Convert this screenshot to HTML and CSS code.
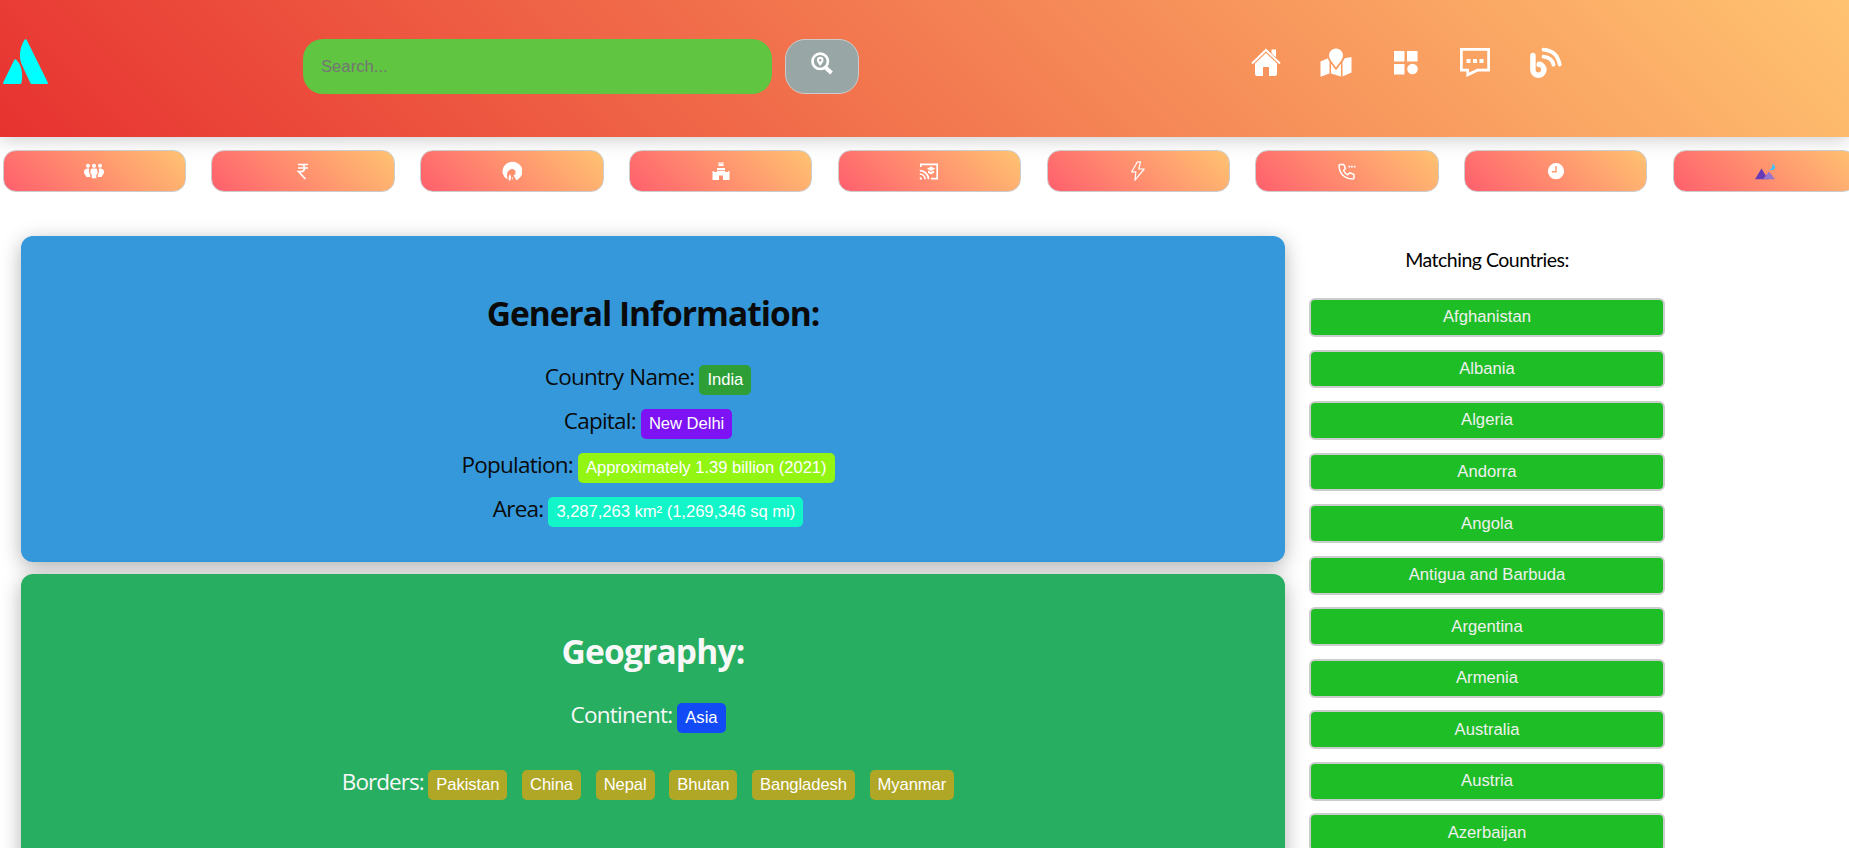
FILE: index.html
```html
<!DOCTYPE html>
<html lang="en">
<head>
<meta charset="utf-8">
<title>Countries</title>
<link rel="stylesheet" href="styles.css">
</head>
<body>
<header class="header">
  <svg class="logo" viewBox="0 0 45 45"><path d="M23.5 .5Q22.5-.3 21.5.7C17 8 15.5 17 18.5 25L27.3 44Q27.6 45 28.8 45H44Q45.4 45 44.8 43.6ZM13.5 21Q12.3 19.6 11.2 21L.2 43.6Q-.2 45 1 45H17Q18.3 45 18.6 43.4C20 36 19.2 27 13.5 21Z" fill="#0ff"/></svg>
  <input class="search" type="text" placeholder="Search...">
  <button class="go"><svg width="22" height="23" viewBox="0 0 22 23"><circle cx="9.2" cy="9.3" r="7.7" fill="none" stroke="#fff" stroke-width="2.700"/><path d="M14.5 15.5l6 5.5" stroke="#fff" stroke-width="4" fill="none"/><path fill="#fff" fill-rule="evenodd" d="M9.2 4.8a3.3 3.3 0 0 0-3.3 3.4c0 2 2 3.7 3.3 5.8 1.300-2.100 3.300-3.800 3.300-5.800a3.300 3.300 0 0 0-3.300-3.400zm0 2.300a1.200 1.200 0 1 1 0 2.400 1.200 1.200 0 0 1 0-2.400z"/></svg></button>
  <nav class="nav">
    <svg width="30" height="32" viewBox="0 0 30 32"><path d="M1 16.500L15 3l14 13.500" fill="none" stroke="#fff" stroke-width="2"/><path d="M20.500 2.500h4.500v8l-4.500-4.200zM15 6L4 16.500V27q0 2 2 2h6V20h6v9h6q2 0 2-2V16.500z" fill="#fff"/></svg>
    <svg class="map" width="32" height="32" viewBox="0 0 32 32"><path fill="#fff" d="M16 1.500a7 7 0 0 0-7 7c0 4 5 8.500 7 12 2-3.500 7-8 7-12a7 7 0 0 0-7-7zM.5 14.500L8 11.300q.5 2 1.500 3.500V26.500L.5 29.700zM11 16.500l4.300 6q.7.800 1.400 0l4.300-6V29.500L11 26.500zM22.500 15q2-3 2.200-3.700L31.500 10V25.500l-9 4z"/></svg>
    <svg class="apps" width="26" height="32" viewBox="0 0 26 32"><path fill="#fff" d="M1 4h10.500v10.500H1zM14 4h10.500v10.500H14zM1 17h10.500v10.500H1z"/><circle cx="19.500" cy="22" r="5.300" fill="#fff"/></svg>
    <svg class="chat" width="30" height="32" viewBox="0 0 30 32"><path d="M1.400 2.400h27.200v20.800H17.500l-9.800 4.600v-4.600H1.400z" fill="none" stroke="#fff" stroke-width="2.700"/><path fill="#fff" d="M6.500 12h4v4h-4zm6.500 0h4v4h-4zm6.500 0h4v4h-4z"/></svg>
    <svg class="blog" width="32" height="32" viewBox="0 0 32 32"><g fill="none" stroke="#fff" stroke-linecap="round"><path stroke-width="5.500" d="M2.900 8.500V22.800a5.500 5.500 0 1 0 6.300-5.500"/><path stroke-width="3.800" d="M13.500 9.700q8.500 1 10 8M13.500 2.600Q27 3.500 29.700 17.500"/></g></svg>
  </nav>
</header>
<div class="tabs">
  <button class="tab"><svg viewBox="0 0 20 20"><g fill="#fff"><circle cx="4" cy="4.800" r="2"/><circle cx="10" cy="4.800" r="2.100"/><circle cx="16" cy="4.800" r="2"/><path d="M3 7.500h2.300L4.800 10.500l1.400 3.500v2H2.500L1.300 14Q0 13 0 11 0 8 3 7.500zM17 7.500h-2.300l.5 3-1.400 3.500v2h3.700l1.200-2Q20 13 20 11q0-3-3-3.500zM7.500 7.500h5Q14 9 13.600 12L12.300 14v3.200H7.700V14L6.400 12Q6 9 7.500 7.500z"/></g></svg></button>
  <button class="tab"><svg viewBox="0 0 20 20"><path d="M5 3.500h10M5 7h10M5 3.500h3q3.500 0 3.500 3.500T8 10.700H5.500L12.500 18" fill="none" stroke="#fff" stroke-width="1.700"/></svg></button>
  <button class="tab"><svg viewBox="0 0 20 20"><path fill="#fff" d="M5.500 18.500A10 9.500 0 1 1 18 16.500L14.600 19.500 11.500 14.500Q14 13.500 13.500 10.500T9.500 8Q5.500 9 5 14zM6.800 19.500L6.600 16 8 13 9.200 16 8.700 17.500 8.500 19.500zM10.300 15.500l.7 3.800-1.300-1.800z"/></svg></button>
  <button class="tab"><svg viewBox="0 0 20 20"><path fill="#fff" d="M7.500 1H8.500v1.700h1V1h1v1.700h1V1h1v4H7.500zM6 7h8v2.200H6zM1.500 10h1.300v1h3V9.900h8.400V11h3V10h1.300v9h-6.500v-4.500h-4V19H1.500z"/></svg></button>
  <button class="tab"><svg viewBox="0 0 20 20"><g fill="none" stroke="#fff" stroke-width="1.700"><path d="M1.800 6V3.300h16.400v14.400H12M.8 9.500a9 9 0 0 1 8.700 8.800M.8 13a5.500 5.500 0 0 1 5.300 5.300"/></g><path fill="#fff" d="M.8 16a2.500 2.500 0 0 1 2.400 2.400H.8zM8 7.800L12 5.500l4.200 2.300L12 10zM9 9.500l3 1.600 3-1.600v2.200l-3 1.800-3-1.800z"/></svg></button>
  <button class="tab"><svg viewBox="0 0 20 20"><path d="M9.500.8L3.700 10.800h4.200L7 19.200 16.200 8h-5.400L12.500.8z" fill="none" stroke="#fff" stroke-width="1.200" stroke-linejoin="round"/></svg></button>
  <button class="tab"><svg viewBox="0 0 20 20"><path d="M3 3.500H6.800L8.500 7.500 6.500 9.500Q8 12.500 10.800 13.700L12.700 11.800 17 13.500V17Q17 18 15.500 18 3 17 2 5 2 3.700 3 3.500z" fill="none" stroke="#fff" stroke-width="1.500" stroke-linejoin="round"/><path stroke="#fff" stroke-width="1.700" d="M11.500 5.700h1.700M14 5.700h1.700M16.700 5.700h1.700"/></svg></button>
  <button class="tab"><svg viewBox="0 0 20 20"><circle cx="10" cy="10.200" r="8.100" fill="#fff"/><path d="M10 5v5.700H5.800" fill="none" stroke="#ff9a75" stroke-width="1.500"/></svg></button>
  <button class="tab"><svg viewBox="0 0 20 20"><path d="M6.500 7.500L13 18.300H0z" fill="#673ab7"/><path d="M14 10.500l6 7.800H8z" fill="#9575cd"/><path d="M17.300 2.800q3.600 1.500 2.500 4.900-1.800 2.500-5.600.8 3.600-.7 3.100-5.700z" fill="#40c4ff"/></svg></button>
</div>
<main class="main">
  <div class="cards">
    <section class="card general">
      <h2>General Information:</h2>
      <p><span class="label">Country Name:</span> <span class="pill name">India</span></p>
      <p><span class="label">Capital:</span> <span class="pill capital">New Delhi</span></p>
      <p><span class="label">Population:</span> <span class="pill population">Approximately 1.39 billion (2021)</span></p>
      <p><span class="label">Area:</span> <span class="pill area">3,287,263 km² (1,269,346 sq mi)</span></p>
    </section>
    <section class="card geography">
      <h2>Geography:</h2>
      <p><span class="label">Continent:</span> <span class="pill continent">Asia</span></p>
      <p class="borders"><span class="label">Borders:</span> <span class="pill">Pakistan</span> <span class="pill">China</span> <span class="pill">Nepal</span> <span class="pill">Bhutan</span> <span class="pill">Bangladesh</span> <span class="pill">Myanmar</span></p>
    </section>
  </div>
  <aside class="list">
    <p class="list-title">Matching Countries:</p>
    <button class="country">Afghanistan</button>
    <button class="country">Albania</button>
    <button class="country">Algeria</button>
    <button class="country">Andorra</button>
    <button class="country">Angola</button>
    <button class="country">Antigua and Barbuda</button>
    <button class="country">Argentina</button>
    <button class="country">Armenia</button>
    <button class="country">Australia</button>
    <button class="country">Austria</button>
    <button class="country">Azerbaijan</button>
  </aside>
</main>
</body>
</html>
```
FILE: styles.css
```css
* { box-sizing: border-box; }
body {
  margin: 0;
  height: 848px;
  overflow: hidden;
  background: #fff;
  font-family: "Liberation Sans", Arial, sans-serif;
  font-size: 16.67px;
}
button { font: inherit; padding: 0; }
.header {
  display: flex;
  align-items: flex-start;
  height: 137px;
  padding: 39px 0 0 3px;
  background: linear-gradient(45deg, #e73230, #ffc371);
  box-shadow: 0 0 20px rgba(0, 0, 0, .25);
}
.logo { width: 45px; height: 45px; margin-right: 255px; }
.search {
  width: 469px;
  height: 55px;
  padding: 0 18px;
  border: 0;
  border-radius: 20px;
  background: #60c540;
  font: inherit;
}
.search::placeholder { color: #757575; opacity: 1; }
.go {
  display: flex;
  justify-content: center;
  align-items: flex-start;
  width: 74px;
  height: 55px;
  margin-left: 13px;
  padding-top: 12px;
  border: 1px solid #ccc;
  border-radius: 20px;
  background: #98a6a5;
}
.nav { display: flex; margin: 8px 0 0 392px; }
.map { margin-left: 38.500px; }
.apps { margin-left: 41.500px; }
.chat { margin-left: 41px; }
.blog { margin-left: 40px; }
.tabs { display: flex; gap: 25.4px; padding: 13px 0 0 2.6px; }
.tab {
  display: flex;
  flex: none;
  align-items: center;
  justify-content: center;
  width: 183.4px;
  height: 42px;
  border: 1px solid #ccc;
  border-radius: 13px;
  background: linear-gradient(45deg, #ff5f6d, #ffc371);
}
.tab svg { width: 20px; height: 20px; }
.main { display: flex; gap: 24px; padding: 44px 0 0 21px; }
.cards { display: flex; flex-direction: column; gap: 12px; width: 1264px; }
.card {
  height: 326px;
  padding-top: 53px;
  border-radius: 12px;
  box-shadow: 0 5px 20px rgba(0, 0, 0, .3);
  font-family: "Open Sans", "Noto Sans", sans-serif;
  font-size: 22.5px;
  text-align: center;
}
.general { background: #3498db; color: #0a0a0a; }
.geography { background: #27ae60; color: #f8f8f8; }
.card h2 { margin: 0 0 18px; font-size: 33.5px; line-height: 48px; letter-spacing: -1px; }
.card .label { word-spacing: 1px; }
.geography h2 { letter-spacing: -.8px; }
.card p { height: 44px; margin: 0; line-height: 44px; white-space: nowrap; word-spacing: -.9px; }
.label { letter-spacing: -.75px; }
.card .borders { margin-top: 23px; word-spacing: -1.2px; }
.borders .label { letter-spacing: -.95px; }
.pill {
  display: inline-block;
  height: 30px;
  margin-right: 10px;
  padding: 0 8px;
  border-radius: 5px;
  background: #b0a727;
  color: #fff;
  font: 16.6px/29px "Liberation Sans", Arial, sans-serif;
  letter-spacing: -.03px;
  word-spacing: 0;
}
.borders .pill { letter-spacing: -.08px; }
.name { background: #2e9f37; }
.capital { background: #7d12f5; }
.population { background: #92f512; }
.area { background: #12f5c8; }
.continent { background: #124af5; }
.list { width: 356px; }
.list-title {
  height: 62px;
  margin: 0;
  padding-top: 9px;
  font: 19.5px/30px Lato, sans-serif;
  letter-spacing: -.5px;
  text-align: center;
}
.country {
  display: block;
  width: 356px;
  height: 38.8px;
  margin-bottom: 12.75px;
  border: 2px solid #ccc;
  border-radius: 6px;
  background: #1ebe26;
  color: #f0f0f0;
}
```
